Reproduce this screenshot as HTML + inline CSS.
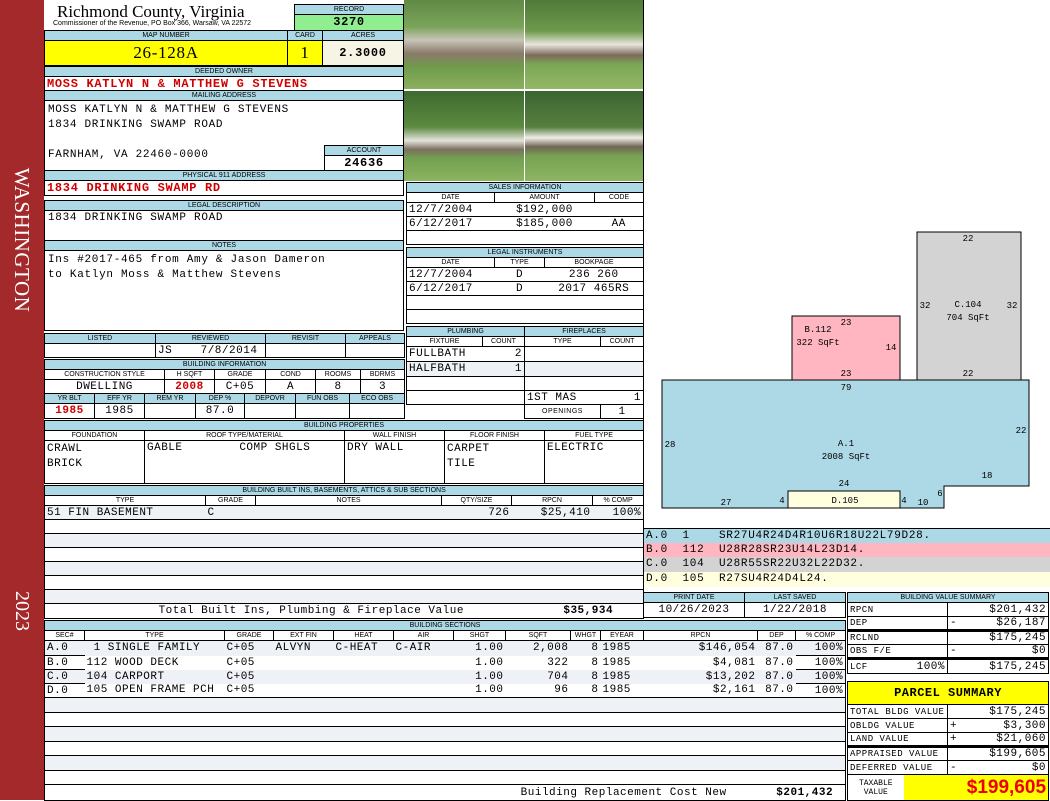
<!DOCTYPE html>
<html><head><meta charset="utf-8"><style>
*{box-sizing:border-box;margin:0;padding:0}
body{width:1050px;height:800px;position:relative;background:#fff;overflow:hidden;font-family:"Liberation Mono",monospace;font-size:11px;color:#000}
.a{position:absolute}
.hd{position:absolute;background:#add8e6;border:1px solid #000;font:7px "Liberation Sans",sans-serif;text-align:center;line-height:9px;overflow:hidden;white-space:nowrap}
.bx{position:absolute;border:1px solid #000;overflow:hidden;white-space:nowrap;letter-spacing:0.7px}
table{position:absolute;border-collapse:collapse;table-layout:fixed}
td{border:1px solid #000;padding:0 2px;overflow:hidden;white-space:nowrap;font:11px "Liberation Mono",monospace;line-height:12px;letter-spacing:0.5px}
tr.h td{background:#add8e6;font:7px "Liberation Sans",sans-serif;text-align:center;line-height:8px;padding:0;letter-spacing:0}
tr.s td{background:#fff;font:7px "Liberation Sans",sans-serif;text-align:center;line-height:8px;padding:0;letter-spacing:0}
.r{text-align:right}.c{text-align:center}
.st td{background:#eef1f6}
.red{color:#d00000;font-weight:bold}
.ph{position:absolute;overflow:hidden}
</style></head><body>
<div class="a" style="left:0;top:0;width:44px;height:800px;background:#a3292b"></div>
<div class="a" style="left:-64px;top:226px;width:172px;height:28px;transform:rotate(90deg);color:#fff;font:21px 'Liberation Serif',serif;text-align:center;line-height:28px;letter-spacing:0.5px">WASHINGTON</div>
<div class="a" style="left:2px;top:598px;width:40px;height:26px;transform:rotate(90deg);color:#fff;font:20px 'Liberation Serif',serif;text-align:center;line-height:26px">2023</div>

<div class="a" style="left:57px;top:2px;font:17px 'Liberation Serif',serif">Richmond County, Virginia</div>
<div class="a" style="left:53px;top:20px;font:7px 'Liberation Sans',sans-serif">Commissioner of the Revenue, PO Box 366, Warsaw, VA 22572</div>
<div class="hd" style="left:294px;top:4px;width:110px;height:11px">RECORD</div>
<div class="bx c" style="left:294px;top:14px;width:110px;height:17px;background:#90ee90;font-weight:bold;font-size:12px;line-height:15px">3270</div>
<div class="hd" style="left:44px;top:30px;width:244px;height:11px">MAP NUMBER</div>
<div class="hd" style="left:287px;top:30px;width:36px;height:11px">CARD</div>
<div class="hd" style="left:322px;top:30px;width:82px;height:11px">ACRES</div>
<div class="bx c" style="left:44px;top:40px;width:244px;height:26px;background:#ff0;font:17px 'Liberation Serif',serif;line-height:24px">26-128A</div>
<div class="bx c" style="left:287px;top:40px;width:36px;height:26px;background:#ff0;font:17px 'Liberation Serif',serif;line-height:24px">1</div>
<div class="bx c" style="left:322px;top:40px;width:82px;height:26px;background:#f6f4e4;font-weight:bold;font-size:12px;line-height:24px">2.3000</div>
<div class="hd" style="left:44px;top:66px;width:360px;height:11px">DEEDED OWNER</div>
<div class="bx red" style="left:44px;top:76px;width:360px;height:15px;line-height:14px;padding-left:2px;font-size:12px">MOSS KATLYN N &amp; MATTHEW G STEVENS</div>
<div class="hd" style="left:44px;top:90px;width:360px;height:11px">MAILING ADDRESS</div>
<div class="bx" style="left:44px;top:100px;width:360px;height:71px;padding:2px 3px;line-height:15px">MOSS KATLYN N &amp; MATTHEW G STEVENS<br>1834 DRINKING SWAMP ROAD<br><br>FARNHAM, VA 22460-0000</div>
<div class="hd" style="left:324px;top:145px;width:80px;height:11px">ACCOUNT</div>
<div class="bx c" style="left:324px;top:155px;width:80px;height:16px;font-weight:bold;font-size:12px;line-height:14px">24636</div>
<div class="hd" style="left:44px;top:170px;width:360px;height:11px">PHYSICAL 911 ADDRESS</div>
<div class="bx red" style="left:44px;top:180px;width:360px;height:16px;line-height:15px;padding-left:2px;font-size:12px">1834 DRINKING SWAMP RD</div>
<div class="hd" style="left:44px;top:200px;width:360px;height:11px">LEGAL DESCRIPTION</div>
<div class="bx" style="left:44px;top:210px;width:360px;height:31px;padding:1px 3px">1834 DRINKING SWAMP ROAD</div>
<div class="hd" style="left:44px;top:240px;width:360px;height:11px">NOTES</div>
<div class="bx" style="left:44px;top:250px;width:360px;height:81px;padding:2px 3px;line-height:15px">Ins #2017-465 from Amy &amp; Jason Dameron<br>to Katlyn Moss &amp; Matthew Stevens</div>

<div class="ph" style="left:404px;top:0;width:120px;height:89px;background:linear-gradient(#5f8a45 0,#7aa35a 30%,#c7c5b8 45%,#8b7a6a 60%,#6f9a4a 75%,#8bb05f 100%)"></div>
<div class="ph" style="left:525px;top:0;width:119px;height:89px;background:linear-gradient(#4f7a3a 0,#6e9a4c 35%,#e8e6de 50%,#7c6a5a 62%,#7aa755 72%,#93b865 100%)"></div>
<div class="ph" style="left:404px;top:91px;width:120px;height:90px;background:linear-gradient(#3f6a30 0,#5c8a40 40%,#e5e3dc 55%,#7b7060 65%,#73a050 75%,#8cb460 100%)"></div>
<div class="ph" style="left:525px;top:91px;width:119px;height:90px;background:linear-gradient(#3a6530 0,#577f3e 40%,#f0eee8 52%,#706455 62%,#76a252 72%,#8db462 100%)"></div>

<table style="left:406px;top:182px;width:237px">
<colgroup><col style="width:88px"><col style="width:100px"><col style="width:49px"></colgroup>
<tr class="h" style="height:10px"><td colspan="3">SALES INFORMATION</td></tr>
<tr class="s" style="height:10px"><td>DATE</td><td>AMOUNT</td><td>CODE</td></tr>
<tr style="height:14px"><td style="border-right:0">12/7/2004</td><td class="c" style="border-left:0;border-right:0">$192,000</td><td style="border-left:0"></td></tr>
<tr style="height:14px"><td style="border-right:0">6/12/2017</td><td class="c" style="border-left:0;border-right:0">$185,000</td><td class="c" style="border-left:0">AA</td></tr>
<tr style="height:14px"><td colspan="3"></td></tr>
</table>
<table style="left:406px;top:247px;width:237px">
<colgroup><col style="width:88px"><col style="width:50px"><col style="width:99px"></colgroup>
<tr class="h" style="height:10px"><td colspan="3">LEGAL INSTRUMENTS</td></tr>
<tr class="s" style="height:10px"><td>DATE</td><td>TYPE</td><td>BOOKPAGE</td></tr>
<tr style="height:14px"><td style="border-right:0">12/7/2004</td><td class="c" style="border-left:0;border-right:0">D</td><td class="c" style="border-left:0">236 260</td></tr>
<tr style="height:14px"><td style="border-right:0">6/12/2017</td><td class="c" style="border-left:0;border-right:0">D</td><td class="c" style="border-left:0">2017 465RS</td></tr>
<tr style="height:14px"><td colspan="3"></td></tr>
<tr style="height:14px"><td colspan="3"></td></tr>
</table>

<table style="left:44px;top:333px;width:360px">
<colgroup><col style="width:111px"><col style="width:110px"><col style="width:80px"><col style="width:59px"></colgroup>
<tr class="h" style="height:10px"><td>LISTED</td><td>REVIEWED</td><td>REVISIT</td><td>APPEALS</td></tr>
<tr style="height:14px"><td></td><td>JS&nbsp;&nbsp;&nbsp;&nbsp;7/8/2014</td><td></td><td></td></tr>
</table>
<table style="left:44px;top:359px;width:360px">
<colgroup><col style="width:50px"><col style="width:50px"><col style="width:20px"><col style="width:31px"><col style="width:19px"><col style="width:30px"><col style="width:21px"><col style="width:30px"><col style="width:20px"><col style="width:34px"><col style="width:11px"><col style="width:44px"></colgroup>
<tr class="h" style="height:10px"><td colspan="12">BUILDING INFORMATION</td></tr>
<tr class="s" style="height:10px"><td colspan="3">CONSTRUCTION STYLE</td><td colspan="2">H SQFT</td><td colspan="2">GRADE</td><td colspan="2">COND</td><td colspan="2">ROOMS</td><td>BDRMS</td></tr>
<tr style="height:14px"><td colspan="3" class="c">DWELLING</td><td colspan="2" class="c red">2008</td><td colspan="2" class="c">C+05</td><td colspan="2" class="c">A</td><td colspan="2" class="c">8</td><td class="c">3</td></tr>
<tr class="h" style="height:10px"><td>YR BLT</td><td>EFF YR</td><td colspan="2">REM YR</td><td colspan="2">DEP %</td><td colspan="2">DEPOVR</td><td colspan="2">FUN OBS</td><td colspan="2">ECO OBS</td></tr>
<tr style="height:15px"><td class="c red">1985</td><td class="c">1985</td><td colspan="2"></td><td colspan="2" class="c">87.0</td><td colspan="2"></td><td colspan="2"></td><td colspan="2"></td></tr>
</table>
<table style="left:406px;top:326px;width:118px">
<colgroup><col style="width:76px"><col style="width:42px"></colgroup>
<tr class="h" style="height:10px"><td colspan="2">PLUMBING</td></tr>
<tr class="s" style="height:10px"><td>FIXTURE</td><td>COUNT</td></tr>
<tr style="height:15px"><td style="border-right:0">FULLBATH</td><td class="r" style="border-left:0">2</td></tr>
<tr style="height:15px" class="st"><td style="border-right:0">HALFBATH</td><td class="r" style="border-left:0">1</td></tr>
<tr style="height:14px"><td colspan="2"></td></tr>
<tr style="height:14px"><td colspan="2"></td></tr>
</table>
<table style="left:524px;top:326px;width:119px">
<colgroup><col style="width:76px"><col style="width:43px"></colgroup>
<tr class="h" style="height:10px"><td colspan="2">FIREPLACES</td></tr>
<tr class="s" style="height:10px"><td>TYPE</td><td>COUNT</td></tr>
<tr style="height:15px"><td colspan="2"></td></tr>
<tr style="height:15px" class="st"><td colspan="2"></td></tr>
<tr style="height:14px"><td colspan="2"></td></tr>
<tr style="height:14px"><td style="border-right:0">1ST MAS</td><td class="r" style="border-left:0">1</td></tr>
<tr style="height:14px"><td style="font:7px 'Liberation Sans',sans-serif;text-align:center">OPENINGS</td><td class="c">1</td></tr>
</table>
<table style="left:44px;top:420px;width:599px">
<colgroup><col style="width:100px"><col style="width:200px"><col style="width:100px"><col style="width:100px"><col style="width:99px"></colgroup>
<tr class="h" style="height:10px"><td colspan="5">BUILDING PROPERTIES</td></tr>
<tr class="s" style="height:10px"><td>FOUNDATION</td><td>ROOF TYPE/MATERIAL</td><td>WALL FINISH</td><td>FLOOR FINISH</td><td>FUEL TYPE</td></tr>
<tr style="height:43px"><td style="vertical-align:top;line-height:15px;padding-top:1px">CRAWL<br>BRICK</td><td style="vertical-align:top;padding-top:1px">GABLE&nbsp;&nbsp;&nbsp;&nbsp;&nbsp;&nbsp;&nbsp;&nbsp;COMP SHGLS</td><td style="vertical-align:top;padding-top:1px">DRY WALL</td><td style="vertical-align:top;line-height:15px;padding-top:1px">CARPET<br>TILE</td><td style="vertical-align:top;padding-top:1px">ELECTRIC</td></tr>
</table>
<table style="left:44px;top:485px;width:599px">
<colgroup><col style="width:161px"><col style="width:50px"><col style="width:186px"><col style="width:70px"><col style="width:81px"><col style="width:51px"></colgroup>
<tr class="h" style="height:10px"><td colspan="6">BUILDING BUILT INS, BASEMENTS, ATTICS &amp; SUB SECTIONS</td></tr>
<tr class="s" style="height:10px"><td>TYPE</td><td>GRADE</td><td>NOTES</td><td>QTY/SIZE</td><td>RPCN</td><td>% COMP</td></tr>
<tr style="height:14px" class="st"><td style="border-right:0">51 FIN BASEMENT</td><td style="border-left:0;border-right:0">C</td><td style="border-left:0;border-right:0"></td><td class="r" style="border-left:0;border-right:0">726</td><td class="r" style="border-left:0;border-right:0">$25,410</td><td class="r" style="border-left:0">100%</td></tr>
<tr style="height:14px"><td colspan="6"></td></tr>
<tr style="height:14px" class="st"><td colspan="6"></td></tr>
<tr style="height:14px"><td colspan="6"></td></tr>
<tr style="height:14px" class="st"><td colspan="6"></td></tr>
<tr style="height:14px"><td colspan="6"></td></tr>
<tr style="height:14px" class="st"><td colspan="6"></td></tr>
<tr style="height:15px"><td colspan="6" class="r" style="padding-right:30px;">Total Built Ins, Plumbing &amp; Fireplace Value&nbsp;&nbsp;&nbsp;&nbsp;&nbsp;&nbsp;&nbsp;&nbsp;&nbsp;&nbsp;&nbsp;&nbsp;&nbsp;&nbsp;<b>$35,934</b></td></tr>
</table>
<table style="left:44px;top:620px;width:801px">
<colgroup><col style="width:40px"><col style="width:140px"><col style="width:49px"><col style="width:60px"><col style="width:60px"><col style="width:60px"><col style="width:52px"><col style="width:65px"><col style="width:30px"><col style="width:43px"><col style="width:114px"><col style="width:38px"><col style="width:50px"></colgroup>
<tr class="h" style="height:10px"><td colspan="13">BUILDING SECTIONS</td></tr>
<tr class="s" style="height:10px"><td>SEC#</td><td>TYPE</td><td>GRADE</td><td>EXT FIN</td><td>HEAT</td><td>AIR</td><td>SHGT</td><td>SQFT</td><td>WHGT</td><td>EYEAR</td><td>RPCN</td><td>DEP</td><td>% COMP</td></tr>
<tr style="height:15px" class="st"><td style="border-right:0">A.0</td><td style="border:0">&nbsp;1 SINGLE FAMILY</td><td style="border:0">C+05</td><td style="border:0">ALVYN</td><td style="border:0">C-HEAT</td><td style="border:0">C-AIR</td><td class="r" style="border:0">1.00</td><td class="r" style="border:0">2,008</td><td class="r" style="border:0">8</td><td style="border:0">1985</td><td class="r" style="border:0">$146,054</td><td class="r" style="border:0">87.0</td><td class="r" style="border-left:0">100%</td></tr>
<tr style="height:14px"><td style="border-right:0">B.0</td><td style="border:0">112 WOOD DECK</td><td style="border:0">C+05</td><td style="border:0"></td><td style="border:0"></td><td style="border:0"></td><td class="r" style="border:0">1.00</td><td class="r" style="border:0">322</td><td class="r" style="border:0">8</td><td style="border:0">1985</td><td class="r" style="border:0">$4,081</td><td class="r" style="border:0">87.0</td><td class="r" style="border-left:0">100%</td></tr>
<tr style="height:14px" class="st"><td style="border-right:0">C.0</td><td style="border:0">104 CARPORT</td><td style="border:0">C+05</td><td style="border:0"></td><td style="border:0"></td><td style="border:0"></td><td class="r" style="border:0">1.00</td><td class="r" style="border:0">704</td><td class="r" style="border:0">8</td><td style="border:0">1985</td><td class="r" style="border:0">$13,202</td><td class="r" style="border:0">87.0</td><td class="r" style="border-left:0">100%</td></tr>
<tr style="height:14px"><td style="border-right:0">D.0</td><td style="border:0">105 OPEN FRAME PCH</td><td style="border:0">C+05</td><td style="border:0"></td><td style="border:0"></td><td style="border:0"></td><td class="r" style="border:0">1.00</td><td class="r" style="border:0">96</td><td class="r" style="border:0">8</td><td style="border:0">1985</td><td class="r" style="border:0">$2,161</td><td class="r" style="border:0">87.0</td><td class="r" style="border-left:0">100%</td></tr>
<tr style="height:15px" class="st"><td colspan="13"></td></tr>
<tr style="height:14px"><td colspan="13"></td></tr>
<tr style="height:15px" class="st"><td colspan="13"></td></tr>
<tr style="height:14px"><td colspan="13"></td></tr>
<tr style="height:15px" class="st"><td colspan="13"></td></tr>
<tr style="height:14px"><td colspan="13"></td></tr>
<tr style="height:16px"><td colspan="13" class="r" style="padding-right:12px">Building Replacement Cost New&nbsp;&nbsp;&nbsp;&nbsp;&nbsp;&nbsp;&nbsp;<b>$201,432</b></td></tr>
</table>

<div class="a" style="left:643px;top:0;width:1px;height:528px;background:#000"></div>
<svg class="a" style="left:0;top:0" width="1050" height="528">
<g font-family="Liberation Mono,monospace" font-size="9" text-anchor="middle">
<rect x="917" y="232" width="104" height="148" fill="#d3d3d3" stroke="#000"/>
<rect x="792" y="316" width="108" height="64" fill="#ffb6c1" stroke="#000"/>
<polygon points="662,380 1029,380 1029,486 944,486 944,508 900,508 900,491 788,491 788,508 662,508" fill="#add8e6" stroke="#000"/>
<rect x="788" y="491" width="112" height="17" fill="#ffffe0" stroke="#000"/>
<text x="968" y="241">22</text><text x="925" y="308">32</text><text x="1012" y="308">32</text>
<text x="968" y="307">C.104</text><text x="968" y="320">704 SqFt</text><text x="968" y="376">22</text>
<text x="846" y="325">23</text><text x="818" y="332">B.112</text><text x="818" y="345">322 SqFt</text><text x="891" y="350">14</text><text x="846" y="376">23</text>
<text x="846" y="390">79</text><text x="670" y="447">28</text><text x="1021" y="433">22</text>
<text x="846" y="446">A.1</text><text x="846" y="459">2008 SqFt</text>
<text x="844" y="486">24</text><text x="987" y="478">18</text><text x="940" y="496">6</text>
<text x="726" y="505">27</text><text x="782" y="503">4</text><text x="904" y="503">4</text><text x="923" y="505">10</text>
<text x="845" y="503">D.105</text>
</g></svg>

<div class="a" style="left:643px;top:528px;width:407px;height:59px;border:1px solid #000;border-right:0"></div>
<div class="a" style="left:644px;top:529px;width:406px;height:14px;background:#add8e6;font-size:11px;line-height:14px;padding-left:2px;white-space:pre;letter-spacing:0.7px">A.0  1    SR27U4R24D4R10U6R18U22L79D28.</div>
<div class="a" style="left:644px;top:543px;width:406px;height:14px;background:#ffb6c1;font-size:11px;line-height:14px;padding-left:2px;white-space:pre;letter-spacing:0.7px">B.0  112  U28R28SR23U14L23D14.</div>
<div class="a" style="left:644px;top:557px;width:406px;height:15px;background:#d3d3d3;font-size:11px;line-height:15px;padding-left:2px;white-space:pre;letter-spacing:0.7px">C.0  104  U28R55SR22U32L22D32.</div>
<div class="a" style="left:644px;top:572px;width:406px;height:15px;background:#ffffe0;font-size:11px;line-height:15px;padding-left:2px;white-space:pre;letter-spacing:0.7px">D.0  105  R27SU4R24D4L24.</div>

<table style="left:643px;top:592px;width:202px">
<colgroup><col style="width:101px"><col style="width:101px"></colgroup>
<tr class="h" style="height:10px"><td>PRINT DATE</td><td>LAST SAVED</td></tr>
<tr style="height:15px"><td class="c">10/26/2023</td><td class="c">1/22/2018</td></tr>
</table>

<table style="left:847px;top:592px;width:201px">
<colgroup><col style="width:54px"><col style="width:46px"><col style="width:14px"><col style="width:87px"></colgroup>
<tr class="h" style="height:10px"><td colspan="4">BUILDING VALUE SUMMARY</td></tr>
<tr style="height:14px"><td colspan="2" style="font-size:9px">RPCN</td><td colspan="2" class="r">$201,432</td></tr>
<tr style="height:14px;border-bottom:3px solid #000"><td colspan="2" style="font-size:9px">DEP</td><td style="border-right:0">-</td><td class="r" style="border-left:0">$26,187</td></tr>
<tr style="height:14px"><td colspan="2" style="font-size:9px">RCLND</td><td colspan="2" class="r">$175,245</td></tr>
<tr style="height:14px;border-bottom:3px solid #000"><td colspan="2" style="font-size:9px">OBS F/E</td><td style="border-right:0">-</td><td class="r" style="border-left:0">$0</td></tr>
<tr style="height:15px"><td style="font-size:9px;border-right:0">LCF</td><td class="r" style="border-left:0">100%</td><td colspan="2" class="r">$175,245</td></tr>
</table>
<table style="left:847px;top:681px;width:201px">
<colgroup><col style="width:56px"><col style="width:44px"><col style="width:14px"><col style="width:87px"></colgroup>
<tr style="height:23px"><td colspan="4" class="c" style="background:#ff0;font-weight:bold;font-size:12px">PARCEL SUMMARY</td></tr>
<tr style="height:14px"><td colspan="2" style="font-size:9px">TOTAL BLDG VALUE</td><td colspan="2" class="r">$175,245</td></tr>
<tr style="height:14px"><td colspan="2" style="font-size:9px">OBLDG VALUE</td><td style="border-right:0">+</td><td class="r" style="border-left:0">$3,300</td></tr>
<tr style="height:14px;border-bottom:3px solid #000"><td colspan="2" style="font-size:9px">LAND VALUE</td><td style="border-right:0">+</td><td class="r" style="border-left:0">$21,060</td></tr>
<tr style="height:14px"><td colspan="2" style="font-size:9px">APPRAISED VALUE</td><td colspan="2" class="r">$199,605</td></tr>
<tr style="height:14px"><td colspan="2" style="font-size:9px">DEFERRED VALUE</td><td style="border-right:0">-</td><td class="r" style="border-left:0">$0</td></tr>
<tr style="height:26px"><td style="font-size:8px;line-height:9px;text-align:center;border-right:0;letter-spacing:0">TAXABLE<br>VALUE</td><td colspan="3" class="r" style="background:#ff0;color:#e00;font:bold 19px 'Liberation Sans',sans-serif;border-left:0;padding-right:2px;letter-spacing:0">$199,605</td></tr>
</table>
</body></html>
